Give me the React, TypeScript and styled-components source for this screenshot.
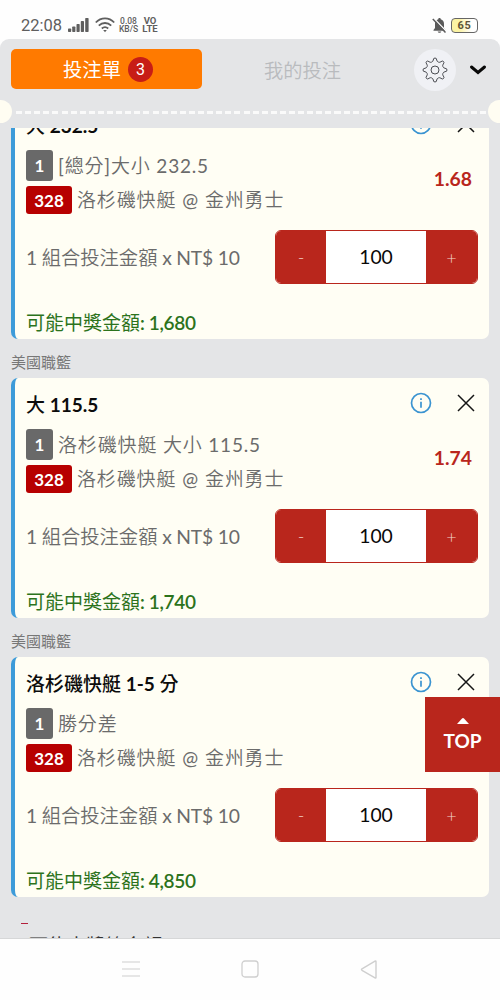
import React from 'react';
import styled, { createGlobalStyle } from 'styled-components';

const Global = createGlobalStyle`
  * { box-sizing: border-box; }
  body { margin: 0; background: #fff; }
  button { font: inherit; border: 0; padding: 0; background: none; }
`;

const Screen = styled.div`
  position: relative;
  width: 500px;
  height: 1000px;
  overflow: hidden;
  display: flex;
  flex-direction: column;
  background: #fefefe;
  color: #6b6b6b;
  font-family: Lato, 'Noto Sans CJK TC', sans-serif;
`;

const StatusBar = styled.div`
  height: 39px;
  flex: none;
  display: flex;
  align-items: center;
  padding: 11px 22px 0 21px;
  color: #5f5f5f;
  font-family: Roboto, sans-serif;
`;
const Clock = styled.span`
  width: 47px;
  font-size: 16.5px;
  white-space: nowrap;
`;
const Stack = styled.span<{ $bold?: boolean; $left: number }>`
  margin-left: ${p => p.$left}px;
  width: ${p => (p.$bold ? 16 : 19)}px;
  display: flex;
  flex-direction: column;
  align-items: center;
  font-size: ${p => (p.$bold ? 9.5 : 8.5)}px;
  line-height: 8.5px;
  font-weight: ${p => (p.$bold ? 700 : 500)};
  white-space: pre;
`;
const Spacer = styled.span<{ $size?: number }>`
  flex: ${p => (p.$size ? `0 0 ${p.$size}px` : '1')};
`;
const Battery = styled.span`
  width: 27px;
  height: 15px;
  margin-left: 4px;
  border: 1.5px solid #666;
  border-radius: 4px;
  background: linear-gradient(90deg, #fbf3a4 30%, #fffbe0 60%, #fff 80%);
  font-size: 11px;
  line-height: 13px;
  font-weight: 700;
  letter-spacing: 0.6px;
  text-align: center;
  color: #5d5538;
`;

const Panel = styled.main`
  height: 900px;
  flex: none;
  display: flex;
  flex-direction: column;
  overflow: hidden;
  border-radius: 9px 9px 0 0;
  background: #e4e5e7;
  border-bottom: 1px solid #d6d7d8;
`;
const Header = styled.header`
  height: 61px;
  flex: none;
  display: flex;
  align-items: center;
  padding-left: 11px;
`;
const ActiveTab = styled.button`
  width: 191px;
  height: 40px;
  margin-top: -1px;
  display: flex;
  align-items: center;
  justify-content: center;
  gap: 7px;
  border-radius: 5px;
  background: #ff7a00;
  color: #fff;
  font-size: 19.3px;
  padding-left: 3px;
`;
const Count = styled.span`
  width: 25px;
  height: 25px;
  border-radius: 50%;
  background: #c71d16;
  font: 16px/25px Roboto, sans-serif;
  text-align: center;
`;
const Tab = styled.button`
  width: 201px;
  color: #b9bbbe;
  font-size: 19.3px;
  font-weight: 350;
`;
const GearButton = styled.button`
  width: 42px;
  height: 42px;
  margin-left: 11px;
  border-radius: 50%;
  background: #f0f1f5;
  display: grid;
  place-items: center;
`;
const Collapse = styled.button`
  margin-left: 13px;
  display: flex;
`;

const Tear = styled.div`
  height: 28px;
  flex: none;
  display: flex;
  align-items: flex-start;
`;
const Notch = styled.i<{ $right?: boolean }>`
  width: 12px;
  height: 23px;
  flex: none;
  border-radius: ${p => (p.$right ? '12px 0 0 12px' : '0 12px 12px 0')};
  background: #fffdf2;
`;
const Dashes = styled.i`
  flex: 1;
  height: 3px;
  margin: 11px 1px 0 4px;
  background: repeating-linear-gradient(90deg, #fafafa 0 6px, transparent 6px 9.1px);
`;

const List = styled.div`
  flex: 1;
  min-height: 0;
  overflow: hidden;
  padding: 0 11px;
`;
const Scrolled = styled.div`
  margin-top: -29px;
`;
const League = styled.div`
  height: 39px;
  padding-top: 2px;
  line-height: 42px;
  font-size: 15px;
  color: #777;
`;
const Card = styled.article`
  height: 240px;
  display: flex;
  flex-direction: column;
  padding: 0 11px 0 11px;
  border-left: 4px solid #3d9bd9;
  border-radius: 7px;
  background: #fffef4;
`;
const CardHead = styled.div`
  height: 51px;
  display: flex;
  align-items: center;
`;
const Title = styled.h2`
  flex: 1;
  margin: -1px 0 0;
  color: #0c0c0c;
  font-size: 19px;
  font-weight: 500;
`;
const IconButton = styled.button<{ $gap?: number }>`
  display: flex;
  margin: -1px ${p => p.$gap ?? 0}px 0 0;
`;
const Details = styled.div`
  height: 65px;
  display: flex;
`;
const Lines = styled.div`
  flex: 1;
  display: flex;
  flex-direction: column;
  gap: 5px;
`;
const Line = styled.div`
  display: flex;
  align-items: center;
  gap: 5px;
  font-size: 19px;
  font-weight: 350;
  line-height: 28px;
  letter-spacing: 0.85px;
  white-space: nowrap;
`;
const Latin = styled.span<{ $weight: number; $tracking?: number }>`
  font-weight: ${p => p.$weight};
  letter-spacing: ${p => p.$tracking ?? 0}px;
`;
const Badge = styled.span<{ $red?: boolean }>`
  width: ${p => (p.$red ? 46 : 27)}px;
  height: ${p => (p.$red ? 28 : 31)}px;
  border-radius: 3px;
  background: ${p => (p.$red ? '#b70000' : '#696969')};
  color: #fff;
  font-size: 17px;
  font-weight: 700;
  line-height: ${p => (p.$red ? 29 : 31)}px;
  letter-spacing: 0;
  text-align: center;
`;
const Odds = styled.span`
  padding: 17px 6px 0 0;
  color: #b9261c;
  font-size: 19.3px;
  line-height: 24px;
  font-weight: 700;
`;
const StakeRow = styled.div`
  height: 54px;
  margin-top: 15px;
  display: flex;
  align-items: center;
`;
const StakeLabel = styled.span`
  flex: 1;
  font-size: 19.3px;
  font-weight: 350;
  white-space: nowrap;
`;
const Stepper = styled.div`
  width: 203px;
  height: 54px;
  display: flex;
  overflow: hidden;
  border: 1px solid #b9261c;
  border-radius: 6px;
  background: #fff;
`;
const Step = styled.button<{ $wide?: boolean }>`
  width: ${p => (p.$wide ? 51 : 50)}px;
  background: #b9261c;
  color: #f3d4c8;
  font-size: 18px;
  font-weight: 300;
`;
const Amount = styled.span`
  width: 100px;
  flex: none;
  color: #080808;
  font-size: 19.3px;
  line-height: 52px;
  text-align: center;
`;
const Payout = styled.div`
  padding: 27px 0 0;
  color: #2c731c;
  font-size: 19px;
  line-height: 24px;
  font-weight: 400;
`;
const Summary = styled.div`
  height: 70px;
  display: flex;
  justify-content: space-between;
  padding: 35px 16px 0 18px;
  color: #333;
  font-size: 19px;
  line-height: 28px;
  b { color: #111; }
`;
const Mark = styled.i`
  width: 7px;
  height: 1px;
  display: block;
  margin: 26px 0 -27px 10px;
  background: #b3203c;
`;

const TopButton = styled.button`
  position: absolute;
  right: 0;
  top: 697px;
  width: 75px;
  height: 75px;
  display: flex;
  flex-direction: column;
  align-items: center;
  padding-top: 21px;
  gap: 5px;
  background: #b9261c;
  color: #fff;
  font-size: 19px;
  line-height: 24px;
  font-weight: 700;
`;

const NavBar = styled.nav`
  flex: 1;
  display: flex;
  justify-content: center;
  align-items: center;
  gap: 101px;
  padding: 0 1px 1px 0;
  background: #fefefe;
`;

const Signal = () => (
  <svg width="22" height="16" viewBox="0 0 22 16" fill="#5f5f5f">
    <rect x="0" y="11.5" width="3.2" height="3.5" rx=".7" />
    <rect x="4.2" y="9.5" width="3.2" height="5.5" rx=".7" />
    <rect x="8.5" y="7" width="3.2" height="8" rx=".7" />
    <rect x="12.8" y="4" width="3.2" height="11" rx=".7" />
    <rect x="17.2" y="1" width="3.4" height="14" rx=".7" />
  </svg>
);
const Wifi = () => (
  <svg width="20" height="16" viewBox="0 0 20 16" fill="none" stroke="#5f5f5f" strokeWidth="1.8">
    <path d="M.8 5.5C6-.1 14-.1 19.2 5.5M3.8 8.6c3.6-3.5 8.8-3.5 12.4 0M6.8 11.5c2-1.7 4.4-1.7 6.4 0" />
    <path d="M8.2 13.1h3.6L10 15.2z" fill="#5f5f5f" stroke="none" />
  </svg>
);
const Muted = () => (
  <svg width="15" height="17" viewBox="0 0 15 17">
    <path d="M7.5 1c.8 0 1.2.5 1.2 1.2C11 2.8 12 4.5 12 7v4l1.5 2v.8h-12V13L3 11V7c0-2.5 1-4.2 3.3-4.8C6.3 1.5 6.7 1 7.5 1zM5.7 14.5h3.6c-.3 1.8-3.3 1.8-3.6 0z" fill="#5a5a5a" />
    <path d="M2 1.5 15 15" stroke="#fefefe" strokeWidth="1.3" />
    <path d="M.8 2 13.5 15.5" stroke="#5a5a5a" strokeWidth="1.5" />
  </svg>
);
const Gear = () => (
  <svg width="26" height="26" viewBox="0 0 26 26" fill="none" stroke="#4b4d52" strokeWidth="1" strokeLinejoin="round">
    <path d="M11.3 3Q11.3 1 13 1Q14.7 1 14.7 3C14.9 5 17.6 6.1 19 4.7Q20.3 3.4 21.5 4.5Q22.6 5.7 21.3 7C19.9 8.4 21 11.1 23 11.3Q25 11.3 25 13Q25 14.7 23 14.7C21 14.9 19.9 17.6 21.3 19Q22.6 20.3 21.5 21.5Q20.3 22.6 19 21.3C17.6 19.9 14.9 21 14.7 23Q14.7 25 13 25Q11.3 25 11.3 23C11.1 21 8.4 19.9 7 21.3Q5.7 22.6 4.5 21.5Q3.4 20.3 4.7 19C6.1 17.6 5 14.9 3 14.7Q1 14.7 1 13Q1 11.3 3 11.3C5 11.1 6.1 8.4 4.7 7Q3.4 5.7 4.5 4.5Q5.7 3.4 7 4.7C8.4 6.1 11.1 5 11.3 3Z" />
    <circle cx="13" cy="13" r="4" />
  </svg>
);
const Chevron = () => (
  <svg width="18" height="12" viewBox="0 0 18 12" fill="none" stroke="#080808" strokeWidth="3" strokeLinecap="round">
    <path d="m2.5 3 6.5 5.5L15.5 3" />
  </svg>
);
const Info = () => (
  <svg width="22" height="22" viewBox="0 0 22 22" fill="none" stroke="#3b94d1" strokeWidth="1.7">
    <circle cx="11" cy="11" r="9.5" />
    <path d="M11 9.8v6M11 6.3v1.8" />
  </svg>
);
const Close = () => (
  <svg width="18" height="18" viewBox="0 0 18 18" stroke="#151515" strokeWidth="1.5">
    <path d="m1 1 16 16M17 1 1 17" />
  </svg>
);

// Splits a mixed string so that the Latin runs can carry their own weight.
const Mixed = ({ text, weight, tracking }: { text: string; weight: number; tracking?: number }) => (
  <span>
    {text.split(/([\x20-\x7e]+)/).map((run, i) =>
      i % 2 ? <Latin key={i} $weight={weight} $tracking={tracking}>{run}</Latin> : run,
    )}
  </span>
);

type Bet = { title: string; market: string; odds: string; payout: string };

const bets: Bet[] = [
  { title: '大 232.5', market: '[總分]大小 232.5', odds: '1.68', payout: '1,680' },
  { title: '大 115.5', market: '洛杉磯快艇 大小 115.5', odds: '1.74', payout: '1,740' },
  { title: '洛杉磯快艇 1-5 分', market: '勝分差', odds: '', payout: '4,850' },
];

const BetCard = ({ bet }: { bet: Bet }) => (
  <Card>
    <CardHead>
      <Title><Mixed text={bet.title} weight={700} /></Title>
      <IconButton $gap={25}><Info /></IconButton>
      <IconButton $gap={3}><Close /></IconButton>
    </CardHead>
    <Details>
      <Lines>
        <Line><Badge>1</Badge><Mixed text={bet.market} weight={400} tracking={0.8} /></Line>
        <Line><Badge $red>328</Badge><Mixed text="洛杉磯快艇 @ 金州勇士" weight={400} tracking={1} /></Line>
      </Lines>
      <Odds>{bet.odds}</Odds>
    </Details>
    <StakeRow>
      <StakeLabel><Mixed text="1 組合投注金額 x NT$ 10" weight={400} tracking={-0.2} /></StakeLabel>
      <Stepper>
        <Step>-</Step>
        <Amount>100</Amount>
        <Step $wide>+</Step>
      </Stepper>
    </StakeRow>
    <Payout><Mixed text={`可能中獎金額: ${bet.payout}`} weight={600} tracking={-0.35} /></Payout>
  </Card>
);

export default function App() {
  return (
    <Screen>
      <Global />
      <StatusBar>
        <Clock>22:08</Clock>
        <Signal />
        <Spacer $size={5} />
        <Wifi />
        <Stack $left={4}><span>0.08</span><span>KB/S</span></Stack>
        <Stack $left={4} $bold><span>VO</span><span>LTE</span></Stack>
        <Spacer />
        <Muted />
        <Battery>65</Battery>
      </StatusBar>
      <Panel>
        <Header>
          <ActiveTab>投注單<Count>3</Count></ActiveTab>
          <Tab>我的投注</Tab>
          <GearButton><Gear /></GearButton>
          <Collapse><Chevron /></Collapse>
        </Header>
        <Tear><Notch /><Dashes /><Notch $right /></Tear>
        <List>
          <Scrolled>
            {bets.map((bet, i) => (
              <React.Fragment key={bet.title}>
                {i > 0 && <League>美國職籃</League>}
                <BetCard bet={bet} />
              </React.Fragment>
            ))}
            <Mark />
            <Summary><span>可能中獎總金額</span><b>8,270</b></Summary>
          </Scrolled>
        </List>
      </Panel>
      <NavBar>
        <svg width="18" height="16" stroke="#cdcdcd" strokeWidth="1.2"><path d="M0 1h18M0 8h18M0 15h18" /></svg>
        <svg width="18" height="18" fill="none" stroke="#cfcfcf" strokeWidth="1.3"><rect x="1" y="1" width="16" height="16" rx="3" /></svg>
        <svg width="18" height="19" fill="none" stroke="#cfcfcf" strokeWidth="1.4" strokeLinejoin="round"><path d="M16 1.5v16q0 .8-1 .3L2 10.3q-1-.8 0-1.5L15 1.2q1-.5 1 .3z" /></svg>
      </NavBar>
      <TopButton>
        <svg width="12" height="6" fill="#fff"><path d="m0 6 5-5.5q1-1 2 0L12 6z" /></svg>
        TOP
      </TopButton>
    </Screen>
  );
}
